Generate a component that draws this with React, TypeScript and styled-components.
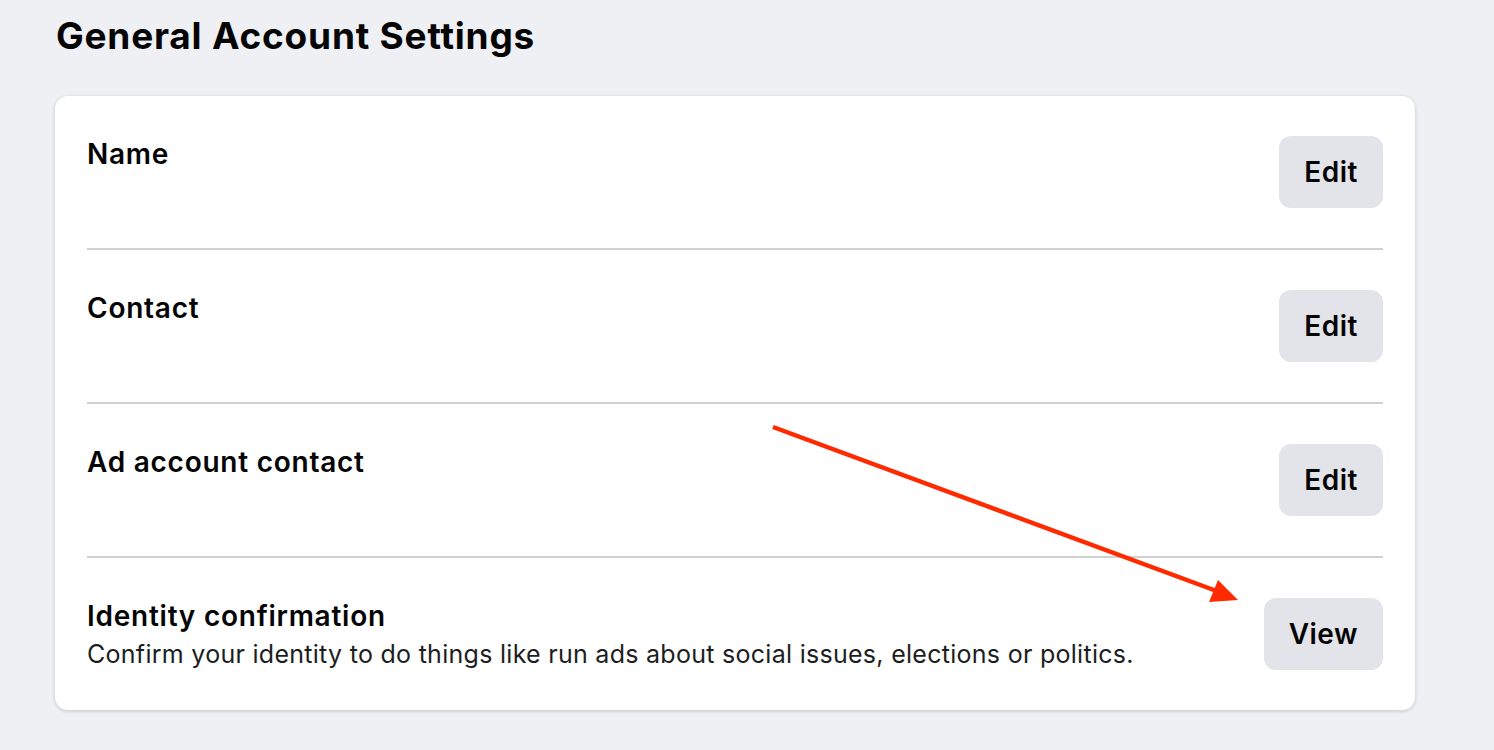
import React from "react";
import styled, { createGlobalStyle } from "styled-components";

const GlobalStyle = createGlobalStyle`
  html, body {
    margin: 0;
    padding: 0;
    background: #eef0f4;
    font-family: Inter, "Noto Sans", "Liberation Sans", sans-serif;
    color: #050505;
  }
`;

const Page = styled.div`
  position: relative;
  width: 1494px;
  height: 750px;
  padding: 12px 0 0 56px;
  box-sizing: border-box;
  overflow: hidden;
`;

const Title = styled.h1`
  margin: 0 0 36px;
  font-size: 37px;
  line-height: 48px;
  font-weight: 700;
  letter-spacing: 0.78px;
`;

const Card = styled.div`
  width: 1360px;
  margin-left: -1px;
  background: #fff;
  border-radius: 13px;
  box-shadow: 0 1px 4px rgba(0, 0, 0, 0.18);
  padding: 0 32px;
  box-sizing: border-box;
`;

const Row = styled.div`
  display: flex;
  justify-content: space-between;
  align-items: flex-start;
  padding: 40px 0;
  border-bottom: 2px solid #ced0d4;

  &:last-child {
    border-bottom: none;
    align-items: center;
  }
`;

const Info = styled.div`
  display: flex;
  flex-direction: column;
  gap: 5px;
`;

const Label = styled.div`
  font-size: 28px;
  line-height: 36px;
  font-weight: 600;
  letter-spacing: 0.75px;
`;

const Description = styled.div`
  font-size: 25px;
  line-height: 31px;
  font-weight: 400;
  letter-spacing: 0.28px;
  color: #1c1e21;
`;

const ActionButton = styled.button`
  height: 72px;
  padding: 0 25px;
  border: none;
  border-radius: 12px;
  background: #e2e4e9;
  font-family: inherit;
  font-size: 28px;
  font-weight: 600;
  letter-spacing: 0.5px;
  color: #050505;
  cursor: pointer;
`;

const Arrow = styled.svg`
  position: absolute;
  left: 0;
  top: 0;
  pointer-events: none;
`;

const rows = [
  { label: "Name", action: "Edit" },
  { label: "Contact", action: "Edit" },
  { label: "Ad account contact", action: "Edit" },
  {
    label: "Identity confirmation",
    description:
      "Confirm your identity to do things like run ads about social issues, elections or politics.",
    action: "View",
  },
];

const App = () => {
  return (
    <Page>
      <GlobalStyle />
      <Title>General Account Settings</Title>
      <Card>
        {rows.map((r) => (
          <Row key={r.label}>
            <Info>
              <Label>{r.label}</Label>
              {r.description && <Description>{r.description}</Description>}
            </Info>
            <ActionButton>{r.action}</ActionButton>
          </Row>
        ))}
      </Card>
      <Arrow width="1494" height="750">
        <line x1="773" y1="427" x2="1222" y2="593" stroke="#ff2a00" strokeWidth="4.5" />
        <polygon points="1238,600 1218,580 1209,602" fill="#ff2a00" />
      </Arrow>
    </Page>
  );
};

export default App;
